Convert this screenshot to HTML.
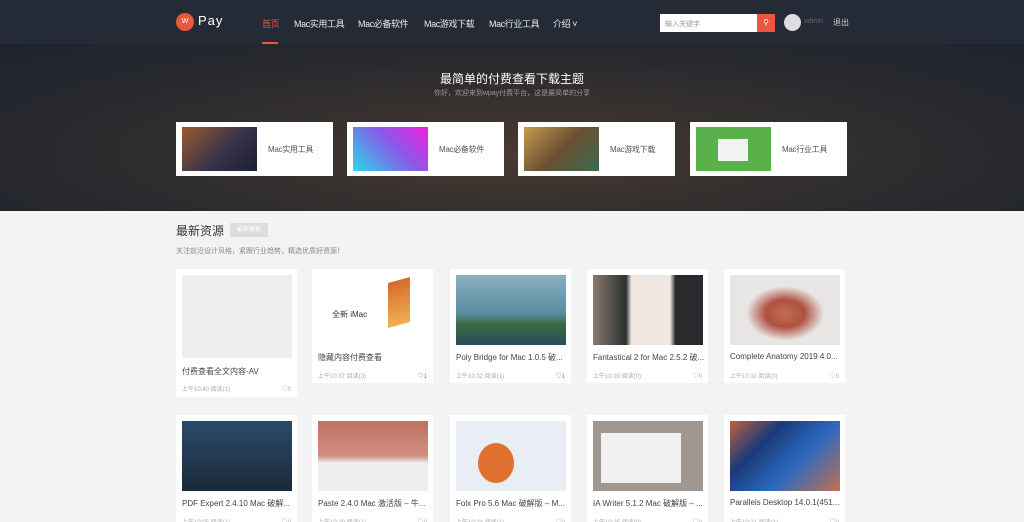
<!DOCTYPE html>
<html><head><meta charset="utf-8"><style>
*{margin:0;padding:0;box-sizing:border-box}
html,body{width:1024px;height:522px;overflow:hidden}
body{background:#f3f3f3;font-family:"Liberation Sans","Noto Sans CJK SC",sans-serif;position:relative}
.nav{position:absolute;left:0;top:0;width:1024px;height:44px;background:#242a36}
.abs{position:absolute}
.nav a{position:absolute;top:17px;font-size:9px;letter-spacing:-0.4px;color:#e8e8e8;white-space:nowrap}
.hero{position:absolute;left:0;top:44px;width:1024px;height:167px;background:radial-gradient(ellipse at 520px 110px,#4a3a32 0%,#35302e 35%,#26282e 70%,#1f232b 100%)}
.hc{position:absolute;top:122px;width:157px;height:54px;background:#fff}
.hc .im{position:absolute;left:6px;top:5px;width:75px;height:44px}
.hc span{position:absolute;left:92px;top:22px;font-size:8px;color:#555;letter-spacing:-0.3px}
.c{position:absolute;width:121px;background:#fff;height:114px}
.c .im{position:absolute;left:6px;top:6px;width:110px;height:70px}
.c .t{position:absolute;left:6px;top:83px;font-size:8px;color:#444;white-space:nowrap;width:112px;overflow:hidden}
.c .m{position:absolute;left:6px;top:102px;font-size:6px;color:#aaa}
.c .r{position:absolute;right:6px;top:102px;font-size:6px;color:#aaa}
</style></head><body>
<div class="nav">
<div class="abs" style="left:176px;top:13px;width:18px;height:18px;border-radius:50%;background:#e9573f;color:#fff;font-size:7px;text-align:center;line-height:18px">W</div>
<div class="abs" style="left:198px;top:13px;color:#fff;font-size:13px;letter-spacing:1px">Pay</div>
<a style="left:262px;color:#e9573f">首页</a>
<div class="abs" style="left:262px;top:42px;width:16px;height:2px;background:#e9573f"></div>
<a style="left:294px">Mac实用工具</a>
<a style="left:358px">Mac必备软件</a>
<a style="left:424px">Mac游戏下载</a>
<a style="left:489px">Mac行业工具</a>
<a style="left:553px">介绍 ˅</a>
<div class="abs" style="left:660px;top:14px;width:97px;height:18px;background:#fff;font-size:7px;color:#999;padding:5px 5px">输入关键字</div>
<div class="abs" style="left:757px;top:14px;width:18px;height:18px;background:#e9573f;color:#fff;font-size:8px;text-align:center;line-height:18px">⚲</div>
<div class="abs" style="left:784px;top:14px;width:17px;height:17px;border-radius:50%;background:#ddd"></div>
<div class="abs" style="left:804px;top:18px;font-size:7px;color:#666">admin</div>
<div class="abs" style="left:833px;top:17px;font-size:8px;color:#ccc">退出</div>
</div>
<div class="hero">
<div class="abs" style="left:0;top:26px;width:1024px;text-align:center;color:#fff;font-size:12px">最简单的付费查看下载主题</div>
<div class="abs" style="left:0;top:44px;width:1024px;text-align:center;color:#999;font-size:7px">你好，欢迎来到wpay付费平台，这是最简单的分享</div>
</div>
<div class="hc" style="left:176px"><div class="im" style="background:linear-gradient(135deg,#9a5a30,#33304a 60%,#1e2030)"></div><span>Mac实用工具</span></div>
<div class="hc" style="left:347px"><div class="im" style="background:linear-gradient(45deg,#28d8e8,#8a5ae8 55%,#f020e0)"></div><span>Mac必备软件</span></div>
<div class="hc" style="left:518px"><div class="im" style="background:linear-gradient(135deg,#c89a50,#6a5030 50%,#3a6a50)"></div><span>Mac游戏下载</span></div>
<div class="hc" style="left:690px"><div class="im" style="background:#5ab04a"><div class="abs" style="left:22px;top:12px;width:30px;height:22px;background:#f2f2f2"></div></div><span>Mac行业工具</span></div>
<div class="abs" style="left:176px;top:222px;font-size:12px;color:#333">最新资源</div>
<div class="abs" style="left:230px;top:223px;width:38px;height:14px;background:#ddd;font-size:6px;color:#fff;text-align:center;line-height:14px">最新更新</div>
<div class="abs" style="left:176px;top:246px;font-size:7px;color:#888">关注前沿设计风格，紧跟行业趋势，精选优质好资源！</div>

<div class="c" style="left:176px;top:269px;height:128px"><div class="im" style="background:#eee;height:83px"></div><div class="t" style="top:97px">付费查看全文内容-AV</div><div class="m" style="top:115px">上午10:40 阅读(1)</div><div class="r" style="top:115px">♡0</div></div>
<div class="c" style="left:312px;top:269px"><div class="im" style="background:#fff;height:76px"><div class="abs" style="left:70px;top:5px;width:22px;height:45px;background:linear-gradient(#d86a30,#f0b050);transform:skewY(-15deg)"></div><div class="abs" style="left:14px;top:34px;font-size:8px;color:#333">全新 iMac</div></div><div class="t">隐藏内容付费查看</div><div class="m">上午10:37 阅读(3)</div><div class="r" style="color:#e9573f">♡1</div></div>
<div class="c" style="left:450px;top:269px"><div class="im" style="background:linear-gradient(#8ab0c0,#5a8aa0 55%,#3a6a40 70%,#2a4a60)"></div><div class="t">Poly Bridge for Mac 1.0.5 破...</div><div class="m">上午10:32 阅读(1)</div><div class="r" style="color:#e9573f">♡1</div></div>
<div class="c" style="left:587px;top:269px"><div class="im" style="background:linear-gradient(90deg,#8a7a70 0%,#2a3030 30%,#f0e8e0 35%,#f0e8e0 70%,#2a2a2e 75%)"></div><div class="t">Fantastical 2 for Mac 2.5.2 破...</div><div class="m">上午10:20 阅读(0)</div><div class="r">♡0</div></div>
<div class="c" style="left:724px;top:269px"><div class="im" style="background:radial-gradient(ellipse at 50% 55%,#c07050 0%,#b05040 25%,#e8e6e4 50%)"></div><div class="t">Complete Anatomy 2019 4.0...</div><div class="m">上午10:11 阅读(0)</div><div class="r">♡0</div></div>

<div class="c" style="left:176px;top:415px"><div class="im" style="background:linear-gradient(#2a4a6a,#1a2a3a)"></div><div class="t">PDF Expert 2.4.10 Mac 破解...</div><div class="m">上午10:05 阅读(1)</div><div class="r">♡0</div></div>
<div class="c" style="left:312px;top:415px"><div class="im" style="background:linear-gradient(#c07060,#d09080 50%,#eee 60%)"></div><div class="t">Paste 2.4.0 Mac 激活版 – 牛...</div><div class="m">上午10:29 阅读(1)</div><div class="r">♡0</div></div>
<div class="c" style="left:450px;top:415px"><div class="im" style="background:#e8eef4"><div class="abs" style="left:22px;top:22px;width:36px;height:40px;border-radius:50%;background:#e07030"></div></div><div class="t">Folx Pro 5.6 Mac 破解版 – M...</div><div class="m">上午10:24 阅读(1)</div><div class="r">♡0</div></div>
<div class="c" style="left:587px;top:415px"><div class="im" style="background:#a09890"><div class="abs" style="left:8px;top:12px;width:80px;height:50px;background:#f2f0ee"></div></div><div class="t">IA Writer 5.1.2 Mac 破解版 – ...</div><div class="m">上午10:25 阅读(0)</div><div class="r">♡0</div></div>
<div class="c" style="left:724px;top:415px"><div class="im" style="background:linear-gradient(135deg,#c06040,#1a3a7a 30%,#2a6ac0 60%,#c07050)"></div><div class="t">Parallels Desktop 14.0.1(451...</div><div class="m">上午10:21 阅读(1)</div><div class="r">♡0</div></div>
</body></html>
